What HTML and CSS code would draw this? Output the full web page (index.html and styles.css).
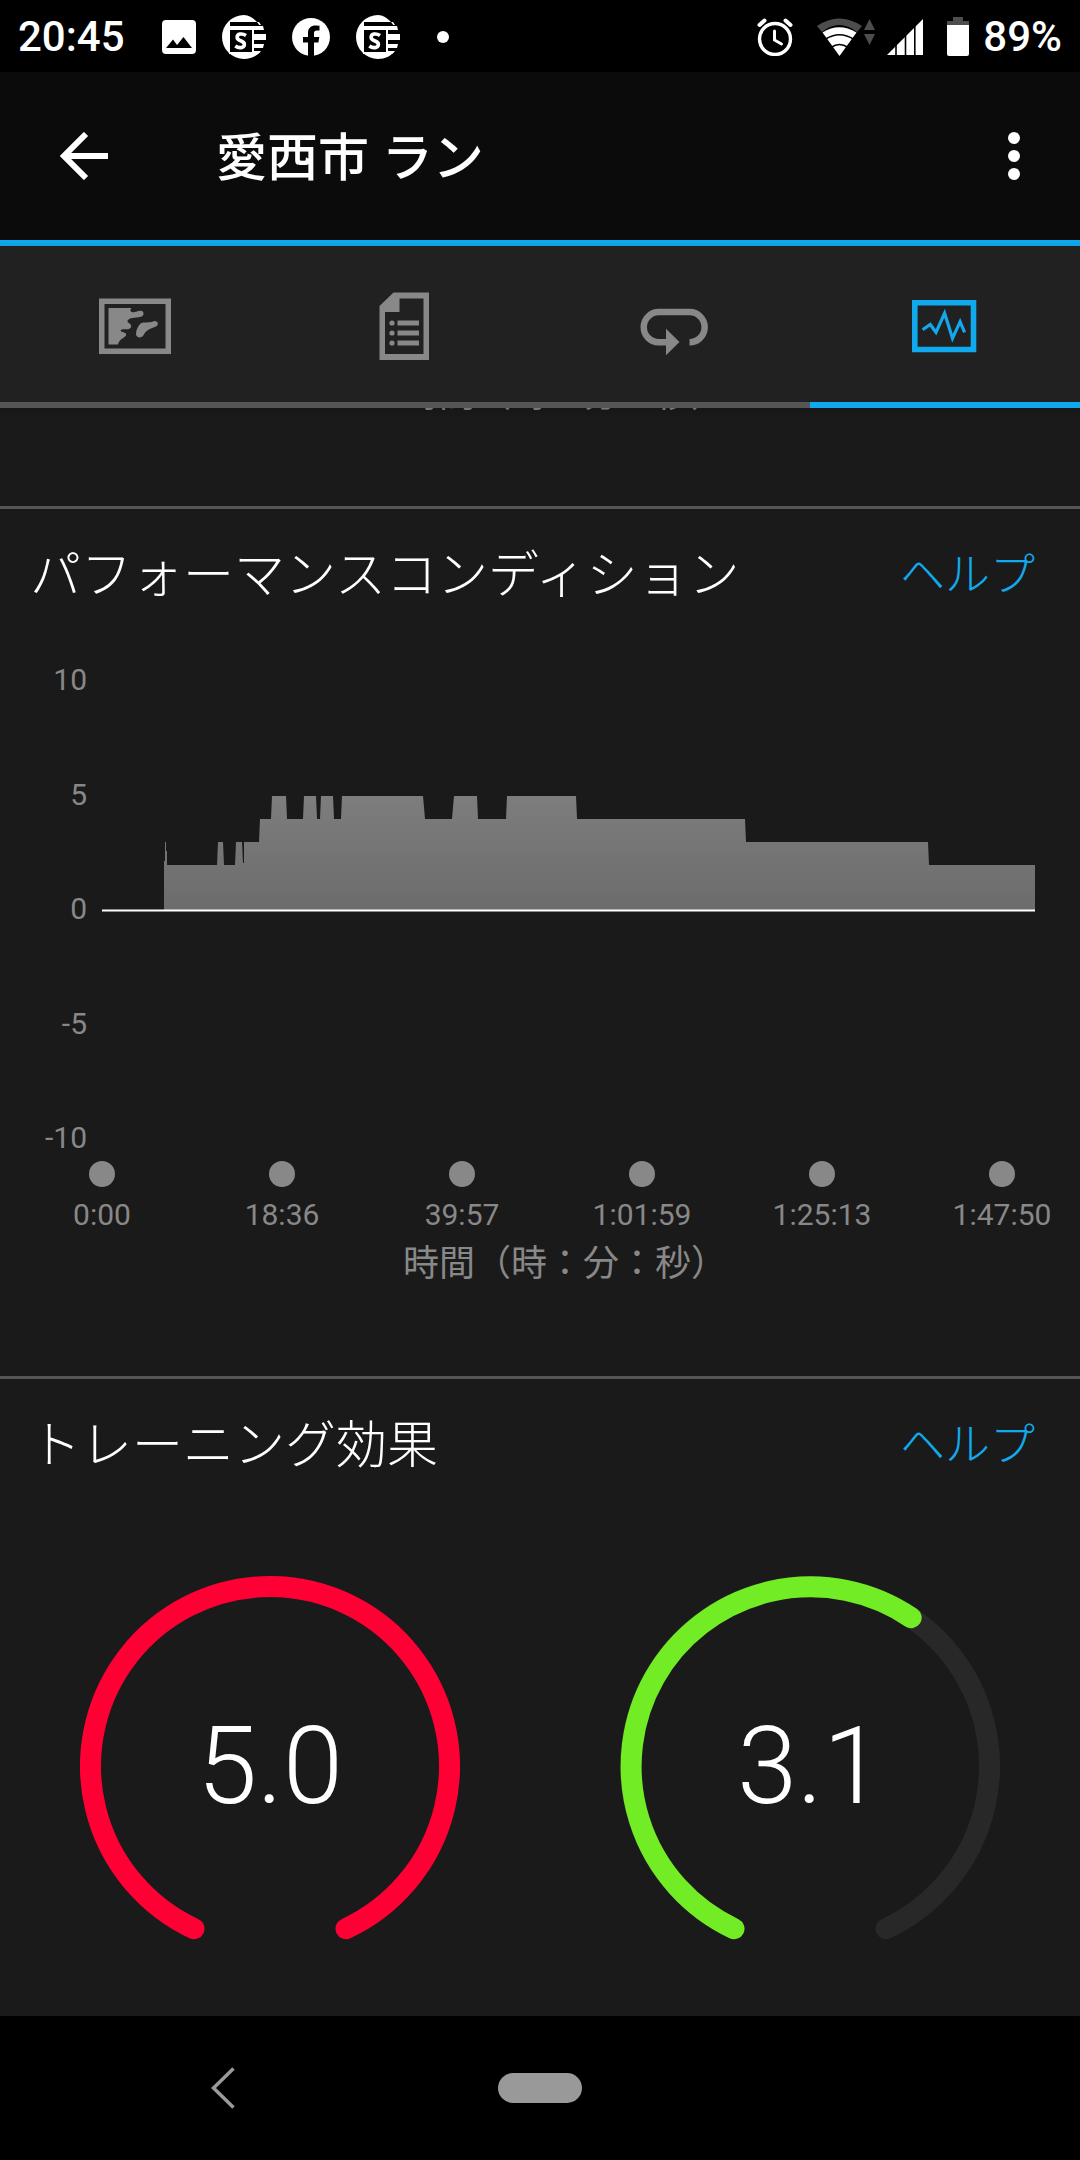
FILE: index.html
```html
<!DOCTYPE html>
<html lang="ja">
<head>
<meta charset="utf-8">
<meta name="viewport" content="width=device-width, initial-scale=1">
<title>愛西市 ラン</title>
<link rel="stylesheet" href="styles.css">
</head>
<body>
<svg class="symbols" aria-hidden="true">
  <symbol id="news" viewBox="0 0 44 44">
    <path fill="#fff" d="M22 0a22 22 0 1 0 0 44c7 0 13-3 17-8h-7v-3h9l1-4H32v-4h12v-6H32v-4h10l-1-4H8v-1h31l-2-3H8V7h27C31 3 27 0 22 0z"/>
    <path fill="#000" d="M8 7h27l3 4H8zM8 15h22v22H8z"/>
    <path fill="#fff" d="M7 37h31l-2 2H7z"/>
    <path fill="none" stroke="#fff" stroke-width="3.6" d="M24 20.500c-2-1.300-4.200-1.800-6-1.400-3.600.8-3.700 4.600-.8 6l3 1.400c3 1.400 2.900 5-.4 5.900-2 .5-4.500 0-6.500-1.400"/>
  </symbol>
</svg>

<header class="status">
  <div class="status-group">
    <span class="clock">20:45</span>
    <svg class="photo" width="34" height="34" viewBox="0 0 34 34"><path fill="#fff" fill-rule="evenodd" d="M4 0h26a4 4 0 0 1 4 4v26a4 4 0 0 1-4 4H4a4 4 0 0 1-4-4V4a4 4 0 0 1 4-4zM4 28h26l-8.500-11-6.500 8-4-5.500z"/></svg>
    <svg width="44" height="44"><use href="#news"/></svg>
    <svg width="38" height="38" viewBox="0 0 38 38"><circle cx="19" cy="19" r="19" fill="#fff"/><path d="M16 38V24.500h-5V19h5v-4c0-5 3-7.500 7.500-7.500l4 .3v4.700h-2.500c-2.300 0-3 1.200-3 2.800V19h5.300l-.9 5.500H22V38z"/></svg>
    <svg width="44" height="44"><use href="#news"/></svg>
    <svg class="more-dot" width="12" height="12"><circle cx="6" cy="6" r="6" fill="#fff"/></svg>
  </div>
  <div class="status-group status-system">
    <svg width="36" height="38" viewBox="0 0 36 38" fill="none" stroke="#fff" stroke-width="3.400" stroke-linecap="round"><circle cx="18" cy="21" r="15.500"/><path d="M2.500 7 7.500 2.500M28.500 2.500l5 4.500" stroke-width="4"/><path d="M17.500 13v9l7 4" stroke-width="3"/></svg>
    <svg class="spaced" width="58" height="38" viewBox="0 0 58 38"><path fill="#4d4d4d" d="M0 8Q22 -7 45 8L40 14Q22 0 5 14zM52.500 1l5.500 11H47zM47 16h11l-5.500 11z"/><path fill="#fff" d="M5.500 14.500Q22 4 39.500 14.500L22.500 38z"/><g fill="none" stroke="#000" stroke-width="1.600"><path d="M8 21.500Q22.500 12 37 21.500M14 29.500q8.500-6 17 0"/></g></svg>
    <svg class="signal" width="36" height="36" viewBox="0 0 36 36"><path fill="#fff" d="M0 36 36 0v36z"/><path stroke="#000" stroke-width="1.600" d="M9 0v36M18.500 0v36M27.800 0v36"/></svg>
    <svg class="spaced" width="22" height="39" viewBox="0 0 22 39"><path fill="#4d4d4d" d="M6 0h10v4h6v5H0V4h6z"/><path fill="#fff" d="M0 8h22v29a2 2 0 0 1-2 2H2a2 2 0 0 1-2-2z"/></svg>
    <span class="battery-level">89%</span>
  </div>
</header>

<div class="appbar">
  <button class="icon-button" type="button" aria-label="戻る"><svg width="48" height="48" viewBox="0 0 48 48" fill="none" stroke="#fff" stroke-width="6"><path d="M48 24H5M26 2 4 24l22 22"/></svg></button>
  <h1 class="title">愛西市 ラン</h1>
  <button class="icon-button menu" type="button" aria-label="メニュー"><svg width="12" height="48" viewBox="0 0 12 48" fill="#fff"><circle cx="6" cy="6" r="6"/><circle cx="6" cy="24" r="6"/><circle cx="6" cy="42" r="6"/></svg></button>
</div>

<nav class="tabs">
  <a class="tab" href="#map" aria-label="地図"><svg width="72" height="72" viewBox="0 0 72 72" fill="currentColor"><path fill="none" stroke="currentColor" stroke-width="5.500" d="M2.750 13.250h66.500v50H2.750z"/><path d="M9.500 20h23c-2 2-1 4 1 4.200 3 .4 5-1.500 8-1.500 4 0 4 5 .5 6-3 1-6 .6-9 1.300-3.500.8-6 3-3.500 4.800 3.500 2 4 5.500-.5 6.400-3 .4-6-1-7.500 1.300.5 2 7 1.500 5.500 5C25 50 20 51.500 19 56.500H9.500z"/><path d="M55.500 33c4 0 4.600 4.500 1 5.700-3 1.200-5 1.600-7.500 3.300-2.500 1.500-3 3-4.400 5-2 4-7.600 2.500-7.600-1 0-4 2-8 4.500-10.500 3.500-2 8 0 14-2.500z"/></svg></a>
  <a class="tab" href="#stats" aria-label="統計"><svg width="72" height="72" viewBox="0 0 72 72" fill="currentColor"><path fill-rule="evenodd" d="M24.500 4.500H60V72H10.500V18zM30.500 10.500V24H16v42h38.500V10.500z"/><circle cx="23" cy="35" r="2.600"/><circle cx="23" cy="45" r="2.600"/><circle cx="23" cy="55" r="2.600"/><path d="M28.500 32.500H50v5H28.500zM28.500 42.500H50v5H28.500zM28.500 52.500H50v5H28.500z"/></svg></a>
  <a class="tab" href="#laps" aria-label="ラップ"><svg width="72" height="72" viewBox="0 0 72 72"><path fill="none" stroke="currentColor" stroke-width="6.500" d="M50.500 54.300a15.150 15.150 0 0 0 0-30.300H19.900a15.150 15.150 0 0 0 0 30.300H28"/><path fill="currentColor" d="M27 40.700 40.500 54 27 67.300z"/></svg></a>
  <a class="tab active" href="#charts" aria-label="グラフ" aria-current="page"><svg width="72" height="72" viewBox="0 0 72 72" fill="none" stroke="currentColor"><path stroke-width="5.600" d="M5.800 14.800h58.700v46.700H5.800z"/><path stroke-width="3.200" d="m13.600 41.700 7.600-5.200 5.800 7.800 8.600-19 7.900 25 7.600-16.600 4.500 10.600"/></svg></a>
</nav>

<main class="content">
  <section class="card previous"><p class="axis-title">時間（時：分：秒）</p></section>

  <section class="card">
    <div class="card-head"><h2 class="card-title">パフォーマンスコンディション</h2><a class="help" href="#help-condition">ヘルプ</a></div>
    <div class="chart">
      <div class="y-axis"><span>10</span><span>5</span><span>0</span><span>-5</span><span>-10</span></div>
      <svg class="plot" viewBox="0 0 933 458" preserveAspectRatio="none" role="img" aria-label="パフォーマンスコンディション">
        <defs><linearGradient id="area" x1="0" y1="0" x2="0" y2="1"><stop offset="0" stop-color="#7d7d7d"/><stop offset="1" stop-color="#6c6c6c"/></linearGradient></defs>
        <path fill="url(#area)" d="M62 230V181H63V162H64V171H65V185H115L116 162H121L122 185H133L134 162H140L141 183H142V162H157L158 139H169L170 116H184L185 139H201L202 116H214L215 139H218L219 116H231L232 139H239L240 116H321L323 139H350L352 116H375L376 139H404L405 116H474L475 139H643L644 162H826L827 185H933V230z"/>
        <path fill="#fff" d="M0 229.500H933V231.500H0z"/>
      </svg>
    </div>
    <div class="x-axis"><span>0:00</span><span>18:36</span><span>39:57</span><span>1:01:59</span><span>1:25:13</span><span>1:47:50</span></div>
    <p class="axis-title">時間（時：分：秒）</p>
  </section>

  <section class="card">
    <div class="card-head"><h2 class="card-title">トレーニング効果</h2><a class="help" href="#help-effect">ヘルプ</a></div>
    <div class="gauges">
      <div class="gauge">
        <svg viewBox="0 0 380 380"><path stroke="#ff0035" d="M114 352.700A179.500 179.500 0 1 1 266 352.700"/></svg>
        <span class="gauge-value">5.0</span>
      </div>
      <div class="gauge">
        <svg viewBox="0 0 380 380"><path stroke="#282828" d="M114 352.700A179.500 179.500 0 1 1 266 352.700"/><path stroke="#72ec25" d="M114 352.700A179.500 179.500 0 1 1 291.200 41.700"/></svg>
        <span class="gauge-value">3.1</span>
      </div>
    </div>
  </section>
</main>

<footer class="system-nav">
  <button class="icon-button" type="button" aria-label="戻る"><svg width="24" height="42" viewBox="0 0 24 42" fill="none" stroke="#999" stroke-width="3.500"><path d="M22.500 1.500 2.500 21l20 19.500"/></svg></button>
  <button class="home-pill" type="button" aria-label="ホーム"></button>
</footer>
</body>
</html>
```

FILE: styles.css
```css
* {
  box-sizing: border-box;
}

body {
  margin: 0;
  min-height: 100vh;
  display: flex;
  flex-direction: column;
  background: #1a1a1a;
  color: #fff;
  font-family: Roboto, "Noto Sans CJK JP", sans-serif;
}

h1, h2, p {
  margin: 0;
}

a {
  text-decoration: none;
}

svg {
  display: block;
  flex: none;
}

.symbols {
  position: absolute;
  width: 0;
  height: 0;
}

/* Status bar */
.status {
  height: 72px;
  padding: 1px 18px 0;
  display: flex;
  align-items: center;
  justify-content: space-between;
  background: #000;
  font-size: 42px;
  line-height: 48px;
  font-weight: 500;
}

.status-group {
  display: flex;
  align-items: center;
  gap: 26px;
}

.photo,
.more-dot {
  margin-left: 11px;
}

.status-system {
  gap: 12px;
}

.battery-level {
  margin-left: 2px;
}

.spaced {
  margin-left: 12px;
}

/* App bar */
.appbar {
  height: 174px;
  padding: 0 60px;
  display: flex;
  align-items: center;
  background: #0b0b0b;
  border-bottom: 6px solid #11a9ed;
}

.icon-button {
  padding: 0;
  border: 0;
  background: none;
}

.title {
  margin-left: 108px;
  padding-top: 6px;
  font-size: 51px;
  line-height: 72px;
  font-weight: 500;
}

.menu {
  margin-left: auto;
}

/* Tabs */
.tabs {
  display: grid;
  grid-template-columns: repeat(4, 1fr);
  background: #212121;
  box-shadow: 0 2px 8px rgba(0, 0, 0, 0.2);
  z-index: 1;
}

.tab {
  height: 162px;
  display: flex;
  align-items: center;
  justify-content: center;
  color: #888;
  border-bottom: 6px solid #555;
}

.tab.active {
  color: #11a9ed;
  border-color: #11a9ed;
}

/* Cards */
.content {
  flex: 1;
}

.card + .card {
  border-top: 3px solid #555;
}

.previous {
  height: 98px;
  padding-bottom: 87px;
  display: flex;
  flex-direction: column;
  justify-content: flex-end;
  overflow: hidden;
}

.card-head {
  padding: 35px 45px 0 30px;
  display: flex;
  align-items: center;
  justify-content: space-between;
  line-height: 64px;
}

.card-title {
  font-size: 51px;
  font-weight: 300;
}

.help {
  color: #11a9ed;
  font-size: 45px;
  font-weight: 300;
}

/* Performance chart */
.chart {
  margin-top: 54px;
  padding-right: 45px;
  display: flex;
  align-items: center;
  gap: 15px;
}

.y-axis {
  width: 87px;
  height: 494px;
  display: flex;
  flex-direction: column;
  justify-content: space-between;
  text-align: right;
}

.y-axis,
.x-axis {
  color: #888;
  font-size: 30px;
  line-height: 36px;
}

.plot {
  flex: 1;
  min-width: 0;
  height: 458px;
}

.x-axis {
  margin-top: 5px;
  padding: 0 18px 0 42px;
  display: flex;
  justify-content: space-between;
}

.x-axis span {
  width: 120px;
  display: flex;
  flex-direction: column;
  align-items: center;
  gap: 10px;
}

.x-axis span::before {
  content: "";
  width: 26px;
  height: 26px;
  border-radius: 50%;
  background: #888;
}

.axis-title {
  padding-left: 50px;
  color: #888;
  font-size: 36px;
  line-height: 48px;
  text-align: center;
}

.x-axis + .axis-title {
  margin: 7px 0 88px;
}

/* Training effect gauges */
.gauges {
  margin-top: 98px;
  display: grid;
  grid-template-columns: 1fr 1fr;
  justify-items: center;
}

.gauge {
  width: 380px;
  display: grid;
  place-items: center;
}

.gauge svg,
.gauge-value {
  grid-area: 1 / 1;
}

.gauge svg {
  width: 100%;
  fill: none;
  stroke-width: 21px;
  stroke-linecap: round;
}

.gauge-value {
  font-size: 108px;
  line-height: 128px;
  font-weight: 300;
}

/* System navigation */
.system-nav {
  height: 144px;
  display: grid;
  grid-template-columns: 1fr auto 1fr;
  align-items: center;
  background: #000;
}

.system-nav .icon-button {
  justify-self: center;
  margin-right: 53px;
}

.home-pill {
  width: 84px;
  height: 30px;
  padding: 0;
  border: 0;
  border-radius: 15px;
  background: #999;
}
```
